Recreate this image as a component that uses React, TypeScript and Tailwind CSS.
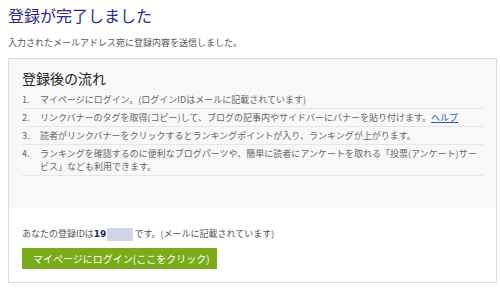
import React from "react";

const items: React.ReactNode[] = [
  <>マイページにログイン。(ログインIDはメールに記載されています)</>,
  <>
    リンクバナーのタグを取得(コピー)して、ブログの記事内やサイドバーにバナーを貼り付けます。
    <a className="text-[#1a5fa8] underline" href="#">ヘルプ</a>
  </>,
  <>読者がリンクバナーをクリックするとランキングポイントが入り、ランキングが上がります。</>,
  <>
    ランキングを確認するのに便利なブログパーツや、簡単に読者にアンケートを取れる「投票(アンケート)サー
    <br />
    ビス」なども利用できます。
  </>,
];

export default function App() {
  return (
    <div
      className="w-[500px] h-[288px] overflow-hidden bg-white pl-[8px] pr-[3px]"
      style={{ fontFamily: '"Noto Sans CJK JP", "Noto Sans", sans-serif' }}
    >
      <h1 className="pt-[3px] text-[16px] leading-[24px] text-[#2c2c84]">登録が完了しました</h1>
      <p className="mt-[9px] text-[9px] leading-[14px] text-[#555]">
        入力されたメールアドレス宛に登録内容を送信しました。
      </p>
      <div className="mt-[8px] border border-[#dcdcdc]">
        <div className="bg-[#f8f8f8] px-[13px] pt-[9px] pb-[32px]">
          <h2 className="text-[14px] leading-[20px] text-[#222] mb-[3px]">登録後の流れ</h2>
          <ol className="text-[9px] text-[#666]">
            {items.map((c, i) => (
              <li key={i} className="border-b border-[#e6e6e6] py-[2px] leading-[13px] flex whitespace-nowrap">
                <span className="w-[18px] shrink-0">{i + 1}.</span>
                <span>{c}</span>
              </li>
            ))}
          </ol>
        </div>
        <div className="px-[13px] pt-[19px] pb-[13px]">
          <p className="text-[9px] leading-[14px] text-[#555] flex items-center">
            あなたの登録IDは
            <span className="font-bold text-[#1f1f5e]" style={{ fontFamily: "Verdana, 'DejaVu Sans', sans-serif" }}>19</span>
            <span className="inline-block w-[26px] h-[13px] bg-[#d4d4e8] mx-[1px]" />
            です。(メールに記載されています)
          </p>
          <button className="mt-[7px] w-[195px] h-[21px] bg-[#7aab1b] text-white text-[10px] leading-[21px] text-left pl-[11px] whitespace-nowrap">
            マイページにログイン(ここをクリック)
          </button>
        </div>
      </div>
    </div>
  );
}
